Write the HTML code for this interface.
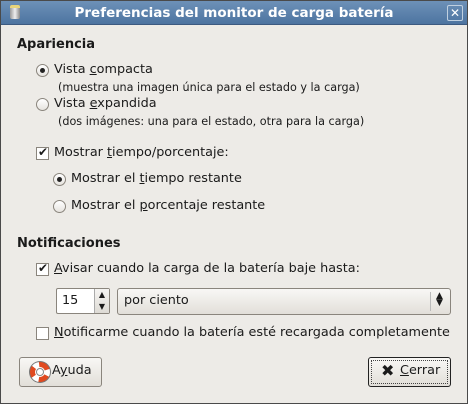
<!DOCTYPE html><html><head><style>
*{margin:0;padding:0;box-sizing:border-box}
body{width:468px;height:404px;background:#3a3a3a;font-family:"DejaVu Sans","Liberation Sans",sans-serif;font-size:12.8px;color:#1a1a1a;position:relative;overflow:hidden}
.win{position:absolute;left:0;top:0;width:468px;height:404px;background:#edebe7;border:1px solid #4a4a4a}
.title{position:absolute;left:0;top:0;width:466px;height:24px;background:linear-gradient(#6d91b8,#4d74a0);border-bottom:1px solid #3c5a80;color:#fff;font-weight:bold;font-size:13.5px;text-align:center;line-height:24px}
.t{position:absolute;white-space:nowrap}
.b{font-weight:bold;font-size:13px}
.s{font-size:11.2px}
.radio{position:absolute;width:13px;height:13px;border-radius:50%;border:1px solid #8a857d;background:linear-gradient(#fff,#e6e3de)}
.radio.on::after{content:"";position:absolute;left:3px;top:3px;width:5px;height:5px;border-radius:50%;background:#222}
.cb{position:absolute;width:13px;height:13px;border:1px solid #8a857d;background:#fff}
.btn{position:absolute;border:1px solid #8a857d;border-radius:3px;background:linear-gradient(#f8f7f5,#e2dfd9)}
u{text-decoration:underline}
</style></head><body><div class="win">
<div class="title">Preferencias del monitor de carga batería</div>
<div style="position:absolute;left:9px;top:4px;width:10px;height:14px;background:linear-gradient(90deg,#999,#eee,#888);border-radius:2px;border-top:3px solid #e8d47a"></div>
<div style="position:absolute;left:446px;top:4px;width:16px;height:16px;border:1px solid #c0d0e0;border-radius:2px;color:#fff;font-weight:bold;font-size:12px;line-height:14px;text-align:center">✕</div>
<div class="t b" style="left:16px;top:36px">Apariencia</div>
<div class="radio on" style="left:35px;top:63px"></div>
<div class="t" style="left:53px;top:61px">Vista <u>c</u>ompacta</div>
<div class="t s" style="left:57px;top:80px">(muestra una imagen única para el estado y la carga)</div>
<div class="radio" style="left:35px;top:97px"></div>
<div class="t" style="left:53px;top:95px">Vista <u>e</u>xpandida</div>
<div class="t s" style="left:57px;top:114px">(dos imágenes: una para el estado, otra para la carga)</div>
<div class="cb" style="left:35px;top:146px"><span style="position:absolute;left:1px;top:-3px;font-size:12px">✔</span></div>
<div class="t" style="left:53px;top:144px">Mostrar <u>t</u>iempo/porcentaje:</div>
<div class="radio on" style="left:52px;top:172px"></div>
<div class="t" style="left:70px;top:170px">Mostrar el <u>t</u>iempo restante</div>
<div class="radio" style="left:52px;top:199px"></div>
<div class="t" style="left:70px;top:197px">Mostrar el <u>p</u>orcentaje restante</div>
<div class="t b" style="left:16px;top:235px">Notificaciones</div>
<div class="cb" style="left:35px;top:262px"><span style="position:absolute;left:1px;top:-3px;font-size:12px">✔</span></div>
<div class="t" style="left:53px;top:260px"><u>A</u>visar cuando la carga de la batería baje hasta:</div>
<div style="position:absolute;left:55px;top:287px;width:54px;height:26px;border:1px solid #8a857d;background:#fff;border-radius:2px"></div>
<div class="t" style="left:61px;top:292px">15</div>
<div style="position:absolute;left:93px;top:288px;width:15px;height:24px;background:linear-gradient(#f5f4f2,#dedbd5);border-left:1px solid #aaa;font-size:8px;line-height:12px;text-align:center">▲<br>▼</div>
<div class="btn" style="left:116px;top:287px;width:334px;height:27px"></div>
<div class="t" style="left:123px;top:292px">por ciento</div>
<div style="position:absolute;left:429px;top:291px;width:1px;height:19px;background:#bbb"></div>
<div class="t" style="left:435px;top:292px;font-size:9px;line-height:7px">▲<br>▼</div>
<div class="cb" style="left:35px;top:326px"></div>
<div class="t" style="left:53px;top:324px"><u>N</u>otificarme cuando la batería esté recargada completamente</div>
<div class="btn" style="left:18px;top:356px;width:83px;height:30px"></div>
<div style="position:absolute;left:29px;top:361px;width:20px;height:20px;border-radius:50%;border:5px dashed #e04a20;background:#fff;box-shadow:0 0 0 1px #777"><div style="position:absolute;left:1px;top:1px;width:8px;height:8px;border-radius:50%;border:1px solid #888"></div></div>
<div class="t" style="left:51px;top:362px">A<u>y</u>uda</div>
<div class="btn" style="left:367px;top:356px;width:83px;height:30px;border-color:#222"><div style="position:absolute;inset:2px;border:1px dotted #444"></div></div>
<div class="t b" style="left:380px;top:360px;font-size:16px">✖</div>
<div class="t" style="left:399px;top:362px"><u>C</u>errar</div>
</div></body></html>
